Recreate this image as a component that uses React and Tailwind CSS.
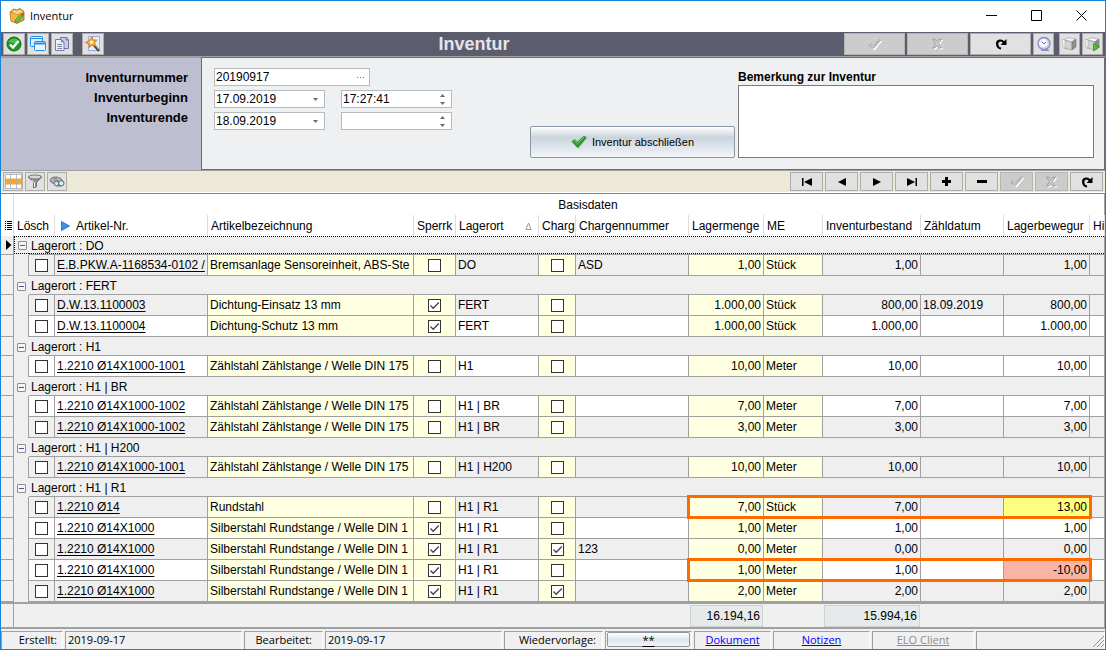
import React, { useState } from "react";

const GROUPS = [
  {
    name: "DO",
    rows: [{ nr: "E.B.PKW.A-1168534-0102 /", text: "Bremsanlage Sensoreinheit, ABS-Ste", lock: false, batch: false, batchNr: "ASD", qty: "1,00", unit: "Stück", stock: "1,00", date: "", move: "1,00" }],
  },
  {
    name: "FERT",
    rows: [
      { nr: "D.W.13.1100003", text: "Dichtung-Einsatz 13 mm", lock: true, batch: false, batchNr: "", qty: "1.000,00", unit: "Stück", stock: "800,00", date: "18.09.2019", move: "800,00" },
      { nr: "D.W.13.1100004", text: "Dichtung-Schutz 13 mm", lock: true, batch: false, batchNr: "", qty: "1.000,00", unit: "Stück", stock: "1.000,00", date: "", move: "1.000,00" },
    ],
  },
  {
    name: "H1",
    rows: [{ nr: "1.2210 Ø14X1000-1001", text: "Zählstahl Zählstange / Welle DIN 175", lock: false, batch: false, batchNr: "", qty: "10,00", unit: "Meter", stock: "10,00", date: "", move: "10,00" }],
  },
  {
    name: "H1 | BR",
    rows: [
      { nr: "1.2210 Ø14X1000-1002", text: "Zählstahl Zählstange / Welle DIN 175", lock: false, batch: false, batchNr: "", qty: "7,00", unit: "Meter", stock: "7,00", date: "", move: "7,00" },
      { nr: "1.2210 Ø14X1000-1002", text: "Zählstahl Zählstange / Welle DIN 175", lock: false, batch: false, batchNr: "", qty: "3,00", unit: "Meter", stock: "3,00", date: "", move: "3,00" },
    ],
  },
  {
    name: "H1 | H200",
    rows: [{ nr: "1.2210 Ø14X1000-1001", text: "Zählstahl Zählstange / Welle DIN 175", lock: false, batch: false, batchNr: "", qty: "10,00", unit: "Meter", stock: "10,00", date: "", move: "10,00" }],
  },
  {
    name: "H1 | R1",
    rows: [
      { nr: "1.2210 Ø14", text: "Rundstahl", lock: false, batch: false, batchNr: "", qty: "7,00", unit: "Stück", stock: "7,00", date: "", move: "13,00", mark: "plus" },
      { nr: "1.2210 Ø14X1000", text: "Silberstahl Rundstange / Welle DIN 1", lock: true, batch: false, batchNr: "", qty: "1,00", unit: "Meter", stock: "1,00", date: "", move: "1,00" },
      { nr: "1.2210 Ø14X1000", text: "Silberstahl Rundstange / Welle DIN 1", lock: true, batch: true, batchNr: "123", qty: "0,00", unit: "Meter", stock: "0,00", date: "", move: "0,00" },
      { nr: "1.2210 Ø14X1000", text: "Silberstahl Rundstange / Welle DIN 1", lock: true, batch: false, batchNr: "", qty: "1,00", unit: "Meter", stock: "1,00", date: "", move: "-10,00", mark: "minus" },
      { nr: "1.2210 Ø14X1000", text: "Silberstahl Rundstange / Welle DIN 1", lock: true, batch: true, batchNr: "", qty: "2,00", unit: "Meter", stock: "2,00", date: "", move: "2,00" },
    ],
  },
];

/* ---------- icons ---------- */

const BoxIcon = () => (
  <svg width="16" height="16" viewBox="0 0 16 16">
    <path d="M1 4 5 1l3 1 3-1.500 4 3V12L8 15.500 2 13Z" fill="#e2a02c" stroke="#9c6518" strokeWidth=".8" />
    <path d="M1.500 5 8 7v8L2.200 12.500Z" fill="#efb545" />
    <path d="M3 3.800 5.500 2 8 3l3-1.500 3 2.500-6 2Z" fill="#f8d888" />
    <path d="m6.500 12 5.500-5.500 2 1.500-5 5.500-3 .800Z" fill="#58cc50" stroke="#2b8a2e" strokeWidth=".7" />
    <path d="m12 6.500 1.300-2 2 1.500L14 8Z" fill="#d9482f" />
  </svg>
);
const OkIcon = () => (
  <svg width="16" height="16" viewBox="0 0 16 16">
    <circle cx="8" cy="8" r="7" fill="#1d9c22" stroke="#0e6b13" strokeWidth="1" />
    <path d="M2.500 6a6 6 0 0 1 11 0c-3 1.500-8 1.500-11 0Z" fill="#66c964" opacity=".7" />
    <path d="m4 8.500 3 3 5.500-6.500" fill="none" stroke="#fff" strokeWidth="2.400" />
  </svg>
);
const WindowsIcon = () => (
  <svg width="18" height="18" viewBox="0 0 18 18" fill="none" stroke="#1e90f0">
    <rect x="1.500" y="1.500" width="12" height="10" rx="1" fill="#e4ecf2" />
    <path d="M1.500 3.500h12" />
    <rect x="5.500" y="6.500" width="11" height="9" rx="1" fill="#eef3f8" />
    <path d="M5.500 8.500h11" strokeWidth="2" />
  </svg>
);
const CopyIcon = () => (
  <svg width="16" height="16" viewBox="0 0 16 16">
    <path d="M6.500 1.500h6l2 2v9h-8Z" fill="#cfcbe6" stroke="#7a6ca6" />
    <path d="M12 1.500V4h2.500" fill="none" stroke="#7a6ca6" />
    <path d="M1.500 3.500h6l2.500 2.500v8.500H1.500Z" fill="#eef1f8" stroke="#6f7f9f" />
    <path d="M7.500 3.500V6H10M3.500 8.500h4.500M3.500 10.500h4.500M3.500 12.500h4.500" fill="none" stroke="#6f7f9f" />
  </svg>
);
const WizardIcon = () => (
  <svg width="18" height="18" viewBox="0 0 18 18">
    <rect x="4.500" y="1.500" width="11" height="14" fill="#e6eefb" stroke="#9db2da" />
    <path d="m9 9 6 7" stroke="#3b3b42" strokeWidth="2.500" />
    <path d="m10 9.500 5 5.800" stroke="#a0a0a8" strokeWidth=".8" />
    <path d="m8 1.500 1 3.500 4 0-2.500 2.700 1.500 3.800-3.800-1.500L5 12.500 5.300 9 1.500 7.500 5.300 5.500Z" fill="#f9b040" stroke="#cf6f13" strokeWidth=".8" />
    <circle cx="7.500" cy="7.300" r="1.700" fill="#fff0b0" />
  </svg>
);
const CheckGhost = () => (
  <svg width="14" height="13" viewBox="0 0 14 13" fill="none">
    <path d="m2 8 2-2 2.500 2.500L12 2l1.500 1.500L6.500 12Z" fill="#fff" stroke="#fff" />
    <path d="m1 7.500 2-2L5.500 8 11.500 1.500 12.500 2.500 5.500 10.500Z" stroke="#a4a4a4" fill="#cccccc" />
  </svg>
);
const CrossGhost = () => (
  <svg width="13" height="12" viewBox="0 0 13 12" fill="none">
    <path d="M2.500 2H5l2 2.500L9 2h2.500l-3 4.500 3 4.500H9L7 8.500 5 11H2.500l3-4.500Z" fill="#fff" stroke="#fff" />
    <path d="M1.500 1H4l2 2.500L8 1h2.500l-3 4.500 3 4.500H8L6 7.500 4 10H1.500l3-4.500Z" stroke="#a0a0a0" fill="#cccccc" />
  </svg>
);
const RedoIcon = () => (
  <svg width="12" height="12" viewBox="0 0 12 12">
    <path d="M6 10.500C1.500 10 .8 3.500 4.500 2.600 6.500 2.200 7.800 3 9 4.500" fill="none" stroke="#000" strokeWidth="2.200" />
    <path d="M11.500 1v6h-6Z" fill="#000" />
  </svg>
);
const ClockIcon = () => (
  <svg width="16" height="16" viewBox="0 0 16 16">
    <path d="M6 13h6l1.500 2H5Z" fill="#8f8fc0" />
    <circle cx="8" cy="7.500" r="6" fill="#cfcff2" stroke="#8b8bc4" strokeWidth="1.300" />
    <circle cx="7.300" cy="7" r="4.300" fill="#f6f6ff" />
    <path d="M5.500 5.500 8 8l2-2" fill="none" stroke="#6a6ab8" />
  </svg>
);
const CubeIcon = ({ go }) => (
  <svg width="17" height="16" viewBox="0 0 17 16">
    <path d="m3 4 4-2.500 7 1.500-3 3Z" fill="#f2f2f0" stroke="#999" strokeWidth=".6" />
    <path d="m3 4 8 2v8l-8-2Z" fill="#d2d4d2" stroke="#8e8e8e" strokeWidth=".6" />
    <path d="m11 6 4-3v8l-4 3Z" fill="#8c8e8c" stroke="#777" strokeWidth=".6" />
    <path d="m1 3 3 1v8l-2-1Z" fill="#f4f6f4" stroke="#aaa" strokeWidth=".6" />
    {go && <path d="m9.500 7.500 6 3.500-6 4Z" fill="#4cc62c" stroke="#237a14" strokeWidth=".6" />}
  </svg>
);
const GreenCheck = () => (
  <svg width="17" height="14" viewBox="0 0 17 14">
    <path d="m1.500 7.500 2.500-2 3 2.500L14 1.500l2 1.500-8.500 10.500Z" fill="#777" opacity=".6" />
    <path d="m1 6.500 2.500-2L6.500 7l6.500-6 2 1.500-8.500 10Z" fill="#25a81f" stroke="#14780f" strokeWidth=".6" />
    <path d="m2.500 6.500 1-1 3 2.700L13 2" fill="none" stroke="#8fe07f" strokeWidth=".7" />
  </svg>
);
const BandIcon = () => (
  <svg width="17" height="15" viewBox="0 0 17 15">
    <path d="M.5.500h16v14H.5Z" fill="#fff" />
    <path d="M0 4.500h17v6H0Z" fill="#fba52e" />
    <path d="M.5.500h16v14H.5ZM5.500 0v15M11.500 0v15" fill="none" stroke="#a4acc0" strokeWidth=".8" />
  </svg>
);
const FunnelIcon = () => (
  <svg width="16" height="15" viewBox="0 0 16 15">
    <path d="M1.500 3 6.500 8.500v5.500l3-1.500v-4l5-5.500Z" fill="#8f9393" stroke="#565a5a" strokeWidth=".8" />
    <ellipse cx="8" cy="3" rx="6.500" ry="2" fill="#d8dada" stroke="#565a5a" strokeWidth=".8" />
    <path d="m4.500 5.800 3 3.200v4" fill="none" stroke="#fff" />
  </svg>
);
const BinocularsIcon = () => (
  <svg width="16" height="13" viewBox="0 0 16 13">
    <path d="m1 4.500 3-2.300L8 2l4 1.500 3 4.500-2 3-5 0L1.500 6.500Z" fill="#9a9e9f" stroke="#5c5c5c" strokeWidth=".7" />
    <path d="m2.500 4.500 4 2.500M8 3l4 3" stroke="#d8dada" />
    <circle cx="7.500" cy="8.500" r="2.400" fill="#c7e3ee" stroke="#4b5358" strokeWidth=".8" />
    <circle cx="12.300" cy="8.300" r="2.600" fill="#d8eef5" stroke="#4b5358" strokeWidth=".8" />
  </svg>
);
const FirstIcon = () => <svg width="12" height="8" viewBox="0 0 12 8"><path d="M1 0h1.500v8H1ZM11 0v8L3 4Z" /></svg>;
const LastIcon = () => <svg width="12" height="8" viewBox="0 0 12 8"><path d="M9.500 0H11v8H9.500ZM1 0v8l8-4Z" /></svg>;
const PrevIcon = () => <svg width="8" height="8" viewBox="0 0 8 8"><path d="M8 0v8L0 4Z" /></svg>;
const NextIcon = () => <svg width="8" height="8" viewBox="0 0 8 8"><path d="M0 0v8l8-4Z" /></svg>;
const PlusIcon = () => <svg width="9" height="9" viewBox="0 0 9 9"><path d="M3 0h3v3h3v3H6v3H3V6H0V3h3Z" /></svg>;
const MinusIcon = () => <svg width="10" height="9" viewBox="0 0 10 9"><path d="M0 3h10v3H0Z" /></svg>;

/* ---------- controls ---------- */

const ToolButton = ({ label, className, disabled, children }) => (
  <button
    type="button"
    aria-label={label}
    disabled={disabled}
    className={`flex shrink-0 items-center justify-center border ${disabled ? "border-[#b4b4b4] bg-[#cccccc]" : "border-[#adadad] bg-[#e1e1e1]"} ${className}`}
  >
    {children}
  </button>
);

const Arrow = ({ up }) => (
  <svg width="5" height="3" viewBox="0 0 5 3" fill="#6b6b6b">
    <path d={up ? "M0 3h5L2.500 0Z" : "M0 0h5L2.500 3Z"} />
  </svg>
);

const Field = ({ id, label, value, kind, className }) => (
  <div className={`flex h-[18px] border border-[#b5b9c0] bg-white ${className}`}>
    <input id={id} aria-label={label} defaultValue={value} className="min-w-0 flex-1 bg-transparent pl-px text-[12px] leading-4 outline-none" />
    {kind === "more" && (
      <button type="button" aria-label="Auswahl öffnen" className="flex w-[17px] items-center justify-center">
        <svg width="8" height="1" viewBox="0 0 8 1" fill="#777"><path d="M0 0h1v1H0ZM3 0h1v1H3ZM6 0h1v1H6Z" /></svg>
      </button>
    )}
    {kind === "date" && (
      <button type="button" aria-label="Kalender öffnen" className="flex w-[17px] items-center justify-center"><Arrow /></button>
    )}
    {kind === "time" && (
      <div className="flex w-[17px] flex-col items-center justify-center gap-[5px]">
        <button type="button" aria-label="Später" className="block"><Arrow up /></button>
        <button type="button" aria-label="Früher" className="block"><Arrow /></button>
      </div>
    )}
  </div>
);

const Tick = ({ label, checked }) => (
  <label className="relative mx-auto block size-[13px]">
    <input type="checkbox" aria-label={label} defaultChecked={checked} className="peer block size-[13px] appearance-none border border-[#333333] bg-white" />
    <svg className="pointer-events-none absolute inset-0 hidden peer-checked:block" width="13" height="13" viewBox="0 0 13 13" fill="none" stroke="#444" strokeWidth="1.300">
      <path d="m2.500 6.500 2.700 2.800L10.800 3.500" />
    </svg>
  </label>
);

const cell = "border-r border-b border-[#a0a0a0] p-0 h-[21px]";
const Text = ({ children, right }) => (
  <div className={`overflow-hidden px-[2px] whitespace-nowrap ${right ? "text-right" : ""}`}>{children}</div>
);

const DataRow = ({ row, place, odd }) => {
  const yellow = "bg-[#ffffe1]";
  const move = row.mark === "plus" ? "bg-[#ffff80]" : row.mark === "minus" ? "bg-[#f8b4a4]" : "";
  return (
    <tr className={odd ? "bg-[#efefef]" : "bg-white"}>
      <td className={`${cell} bg-[#f0f0f0]`} />
      <td className="border-r border-[#a0a0a0] bg-[#efefef] p-0" />
      <td className={cell}><Tick label="Löschen" checked={false} /></td>
      <td className={cell}><Text><a href="#artikel" className="underline underline-offset-2">{row.nr}</a></Text></td>
      <td className={`${cell} ${yellow}`}><Text>{row.text}</Text></td>
      <td className={`${cell} ${yellow}`}><Tick label="Gesperrt" checked={row.lock} /></td>
      <td className={cell}><Text>{place}</Text></td>
      <td className={`${cell} ${yellow}`}><Tick label="Chargenpflichtig" checked={row.batch} /></td>
      <td className={cell}><Text>{row.batchNr}</Text></td>
      <td className={`${cell} ${yellow} relative`}>
        <Text right>{row.qty}</Text>
        {row.mark && <div className="pointer-events-none absolute -top-[2px] -left-[2px] z-10 h-[24px] w-[405px] border-3 border-[#ff6a00]" />}
      </td>
      <td className={`${cell} ${yellow}`}><Text>{row.unit}</Text></td>
      <td className={cell}><Text right>{row.stock}</Text></td>
      <td className={cell}><Text>{row.date}</Text></td>
      <td className={`${cell} ${move}`}><Text right>{row.move}</Text></td>
      <td className={cell} />
    </tr>
  );
};

const GroupRow = ({ name, first, open, onToggle }) => {
  const dots = first ? "border-y border-dotted border-black pt-px" : "pt-[2px]";
  return (
    <tr className="bg-[#efefef]">
      <td className="h-[19px] border-r border-b border-[#a0a0a0] bg-[#f0f0f0] p-0">
        {first && <svg className="ml-[5px]" width="6" height="10" viewBox="0 0 6 10"><path d="M0 0v10l5.500-5Z" /></svg>}
      </td>
      <td className="p-0 align-top">
        <div className={`flex h-[18px] items-center pl-[3px] ${dots} ${first ? "border-l pl-[2px]" : ""}`}>
          <button type="button" onClick={onToggle} aria-label={`Gruppe ${name} umschalten`} className="flex size-[9px] items-center justify-center rounded-[1px] border border-[#8d8d8d] bg-[#f6f6f6]">
            <svg width="5" height="5" viewBox="0 0 5 5" fill="#3c5aa0"><path d={open ? "M0 2h5v1H0Z" : "M0 2h5v1H0ZM2 0h1v5H2Z"} /></svg>
          </button>
        </div>
      </td>
      <td colSpan={13} className="border-r border-b border-[#a0a0a0] p-0 align-top">
        <div className={`flex h-[18px] items-center pl-[2px] ${dots}`}>Lagerort : {name}</div>
      </td>
    </tr>
  );
};

const Head = ({ children, colSpan }) => (
  <th scope="col" colSpan={colSpan} className="h-[21px] border-r border-[#dedede] p-0 text-left font-normal">
    <div className="flex items-center overflow-hidden pl-[3px] whitespace-nowrap">{children}</div>
  </th>
);

const Panel = ({ className, children }) => (
  <div className={`flex h-[18px] shrink-0 items-center border-t border-r border-l border-t-[#a0a0a0] border-r-white border-l-[#a0a0a0] pb-[2px] ${className}`}>{children}</div>
);

export default function App() {
  const [closed, setClosed] = useState({});
  let index = 0;

  return (
    <div className="flex min-h-screen min-w-[1106px] flex-col border border-[#1883d7] bg-[#f0f0f0] font-['Liberation_Sans',Arial,sans-serif] text-[12px] leading-4 text-black">
      <header className="flex h-[31px] items-center bg-white pr-px pb-[2px] pl-2">
        <BoxIcon />
        <span className="flex-1 pl-[5px] font-['Open_Sans',sans-serif] text-[11px]">Inventur</span>
        <button type="button" aria-label="Minimieren" className="flex h-full w-[46px] items-center justify-center">
          <svg width="11" height="11" viewBox="0 0 11 11"><path d="M0 5h11v1H0Z" /></svg>
        </button>
        <button type="button" aria-label="Maximieren" className="flex h-full w-[44px] items-center justify-center">
          <svg width="11" height="11" viewBox="0 0 11 11" fill="none" stroke="#000"><path d="M.5.500h10v10H.5Z" /></svg>
        </button>
        <button type="button" aria-label="Schließen" className="flex h-full w-[46px] items-center justify-center">
          <svg width="11" height="11" viewBox="0 0 11 11" fill="none" stroke="#000"><path d="m.5.500 10 10m0-10-10 10" /></svg>
        </button>
      </header>

      <div className="flex h-[24px] items-center bg-[#5b5d6e] px-[2px]">
        <div className="flex gap-[2px]">
          <ToolButton label="Übernehmen" className="size-[22px]"><OkIcon /></ToolButton>
          <ToolButton label="Fenster" className="size-[22px]"><WindowsIcon /></ToolButton>
          <ToolButton label="Kopieren" className="size-[22px]"><CopyIcon /></ToolButton>
        </div>
        <ToolButton label="Assistent" className="ml-[9px] size-[22px]"><WizardIcon /></ToolButton>
        <h1 className="flex-1 text-center text-[18px] leading-6 font-bold text-[#e4e4e8]">Inventur</h1>
        <div className="flex gap-[2px]">
          <ToolButton label="Speichern" disabled className="h-[22px] w-[61px]"><CheckGhost /></ToolButton>
          <ToolButton label="Abbrechen" disabled className="h-[22px] w-[61px]"><CrossGhost /></ToolButton>
          <ToolButton label="Aktualisieren" className="h-[22px] w-[61px]"><RedoIcon /></ToolButton>
          <ToolButton label="Verlauf" className="h-[22px] w-[21px]"><ClockIcon /></ToolButton>
        </div>
        <div className="ml-[5px] flex gap-[2px]">
          <ToolButton label="Modul" className="h-[22px] w-[21px]"><CubeIcon /></ToolButton>
          <ToolButton label="Modul starten" className="h-[22px] w-[21px]"><CubeIcon go /></ToolButton>
        </div>
      </div>

      <section className="flex border-t border-b border-t-[#a0a0a0] border-b-[#a0a0a0]">
        <div className="w-[200px] shrink-0 border-t border-t-[#a0a0a0] bg-[#bdbecf] pt-[10px] pr-[13px] text-right text-[13px] leading-5 font-bold">
          <label htmlFor="nummer" className="block">Inventurnummer</label>
          <label htmlFor="beginn" className="block">Inventurbeginn</label>
          <label htmlFor="ende" className="block">Inventurende</label>
        </div>
        <div className="flex h-[113px] flex-1 border border-[#6b6c7a] bg-[#eff0f2] pr-[10px] pl-3">
          <div className="grid w-[238px] shrink-0 content-start gap-y-[4px] pt-[10px]">
            <Field id="nummer" label="Inventurnummer" value="20190917" kind="more" className="w-[156px]" />
            <div className="flex gap-4">
              <Field id="beginn" label="Inventurbeginn" value="17.09.2019" kind="date" className="w-[111px]" />
              <Field id="beginnzeit" label="Uhrzeit Beginn" value="17:27:41" kind="time" className="w-[111px]" />
            </div>
            <div className="flex gap-4">
              <Field id="ende" label="Inventurende" value="18.09.2019" kind="date" className="w-[111px]" />
              <Field id="endezeit" label="Uhrzeit Ende" value="" kind="time" className="w-[111px]" />
            </div>
          </div>
          <button type="button" className="mb-[11px] ml-[78px] flex h-8 w-[205px] shrink-0 items-center justify-center gap-1 self-end rounded-[2px] border border-[#8a97a6] bg-linear-to-b from-white from-0% via-[#cbd4de] via-35% to-[#f3f5f8] pb-px text-[11px]">
            <GreenCheck />
            Inventur abschließen
          </button>
          <div className="ml-[3px] flex flex-1 flex-col pt-3">
            <label htmlFor="bemerkung" className="text-[12px] leading-[15px] font-bold">Bemerkung zur Inventur</label>
            <textarea id="bemerkung" className="h-[73px] w-full resize-none border border-[#7a7a7a] bg-white p-1 outline-none" />
          </div>
        </div>
      </section>

      <nav className="flex h-[21px] items-center justify-between bg-[#ece9d8] px-[2px]">
        <div className="flex gap-[2px]">
          <ToolButton label="Spalten" className="h-[19px] w-[20px]"><BandIcon /></ToolButton>
          <ToolButton label="Filter" className="h-[19px] w-[20px]"><FunnelIcon /></ToolButton>
          <ToolButton label="Suchen" className="h-[19px] w-[20px]"><BinocularsIcon /></ToolButton>
        </div>
        <div className="flex gap-[2px]">
          <ToolButton label="Erster Datensatz" className="h-[19px] w-[33px]"><FirstIcon /></ToolButton>
          <ToolButton label="Vorheriger Datensatz" className="h-[19px] w-[33px]"><PrevIcon /></ToolButton>
          <ToolButton label="Nächster Datensatz" className="h-[19px] w-[33px]"><NextIcon /></ToolButton>
          <ToolButton label="Letzter Datensatz" className="h-[19px] w-[33px]"><LastIcon /></ToolButton>
          <ToolButton label="Einfügen" className="h-[19px] w-[33px]"><PlusIcon /></ToolButton>
          <ToolButton label="Löschen" className="h-[19px] w-[33px]"><MinusIcon /></ToolButton>
          <ToolButton label="Datensatz speichern" disabled className="h-[19px] w-[33px]"><CheckGhost /></ToolButton>
          <ToolButton label="Datensatz verwerfen" disabled className="h-[19px] w-[33px]"><CrossGhost /></ToolButton>
          <ToolButton label="Neu laden" className="h-[19px] w-[33px]"><RedoIcon /></ToolButton>
        </div>
      </nav>

      <main className="flex-1 border-t border-white">
        <table className="w-full table-fixed border-separate border-spacing-0 border-t border-t-[#82828c]">
          <colgroup>
            <col className="w-[13px]" />
            <col className="w-[15px]" />
            <col className="w-[26px]" />
            <col className="w-[153px]" />
            <col className="w-[206px]" />
            <col className="w-[42px]" />
            <col className="w-[83px]" />
            <col className="w-[37px]" />
            <col className="w-[113px]" />
            <col className="w-[75px]" />
            <col className="w-[59px]" />
            <col className="w-[98px]" />
            <col className="w-[83px]" />
            <col className="w-[86px]" />
            <col />
          </colgroup>
          <thead className="bg-white">
            <tr>
              <td className="h-[21px] border-r border-[#dedede] p-0" />
              <th colSpan={14} className="border-r border-[#a0a0a0] p-0 pl-[58px] text-center font-normal">Basisdaten</th>
            </tr>
            <tr>
              <td className="h-[21px] border-r border-[#dedede] p-0">
                <svg className="ml-[4px]" width="7" height="9" viewBox="0 0 7 9"><path d="M0 0h1v1H0ZM2 0h5v1H2ZM0 2h1v1H0ZM2 2h5v1H2ZM0 4h1v1H0ZM2 4h5v1H2ZM0 6h1v1H0ZM2 6h5v1H2ZM0 8h1v1H0ZM2 8h5v1H2Z" /></svg>
              </td>
              <Head colSpan={2}>Lösch</Head>
              <Head>
                <svg className="mr-[6px] ml-[3px]" width="9" height="10" viewBox="0 0 9 10"><path d="M.5.500v9L8.500 5Z" fill="#2f94ee" stroke="#1668b8" strokeWidth=".8" /></svg>
                Artikel-Nr.
              </Head>
              <Head>Artikelbezeichnung</Head>
              <Head>Sperrk</Head>
              <Head>
                <span className="flex-1">Lagerort</span>
                <svg className="mr-[6px]" width="7" height="8" viewBox="0 0 7 8" fill="none" stroke="#999"><path d="M.8 7.500h5.400L3.500 1Z" /></svg>
              </Head>
              <Head>Charg</Head>
              <Head>Chargennummer</Head>
              <Head>Lagermenge</Head>
              <Head>ME</Head>
              <Head>Inventurbestand</Head>
              <Head>Zähldatum</Head>
              <Head>Lagerbewegur</Head>
              <Head>Hi</Head>
            </tr>
          </thead>
          <tbody>
            {GROUPS.map((group, g) => {
              index += 1;
              return (
                <React.Fragment key={group.name}>
                  <GroupRow name={group.name} first={g === 0} open={!closed[group.name]} onToggle={() => setClosed({ ...closed, [group.name]: !closed[group.name] })} />
                  {!closed[group.name] &&
                    group.rows.map((row, r) => {
                      index += 1;
                      return <DataRow key={r} row={row} place={group.name} odd={index % 2 === 0} />;
                    })}
                </React.Fragment>
              );
            })}
          </tbody>
          <tfoot className="bg-[#f0f0f0]">
            <tr>
              <td className="h-[27px] border-t-2 border-r border-b-2 border-[#a0a0a0] p-0" />
              <td colSpan={8} className="border-t-2 border-b-2 border-[#a0a0a0] p-0" />
              <td className="border-t-2 border-b-2 border-[#a0a0a0] p-0">
                <div className="mx-px border border-[#d0d3d3] bg-[#e6eaea] py-[2px] pr-[2px] text-right">16.194,16</div>
              </td>
              <td className="border-t-2 border-b-2 border-[#a0a0a0] p-0" />
              <td className="border-t-2 border-b-2 border-[#a0a0a0] p-0">
                <div className="mx-px border border-[#d0d3d3] bg-[#e6eaea] py-[2px] pr-[2px] text-right">15.994,16</div>
              </td>
              <td colSpan={3} className="border-t-2 border-r border-b-2 border-[#a0a0a0] p-0" />
            </tr>
          </tfoot>
        </table>
      </main>

      <footer className="flex gap-[2px] pt-[2px] font-['Open_Sans',sans-serif] text-[11px]">
        <Panel className="w-[62px] justify-end pr-[5px]">Erstellt:</Panel>
        <Panel className="w-[177px] pl-[2px]">2019-09-17</Panel>
        <Panel className="w-[79px] justify-end pr-[10px]">Bearbeitet:</Panel>
        <Panel className="w-[177px] pl-[2px]">2019-09-17</Panel>
        <Panel className="w-[99px] justify-end pr-[6px]">Wiedervorlage:</Panel>
        <Panel className="w-[87px] px-px">
          <button type="button" className="h-[15px] w-full rounded-[2px] border border-[#8a97a6] bg-linear-to-b from-white via-[#dfe5ec] to-[#f3f5f8] leading-3 underline underline-offset-2">**</button>
        </Panel>
        <Panel className="w-[77px] justify-center"><a href="#dokument" className="text-[#0000ff] underline">Dokument</a></Panel>
        <Panel className="w-[97px] justify-center"><a href="#notizen" className="text-[#0000ff] underline">Notizen</a></Panel>
        <Panel className="w-[102px] justify-center"><a href="#elo" className="text-[#8c8c8c] underline">ELO Client</a></Panel>
        <Panel className="min-w-0 flex-1 shrink justify-end">
          <svg width="12" height="12" viewBox="0 0 12 12" stroke="#8e8e8e" className="self-end"><path d="M1 12 12 1M5 12l7-7M9 12l3-3" /></svg>
        </Panel>
      </footer>
    </div>
  );
}
